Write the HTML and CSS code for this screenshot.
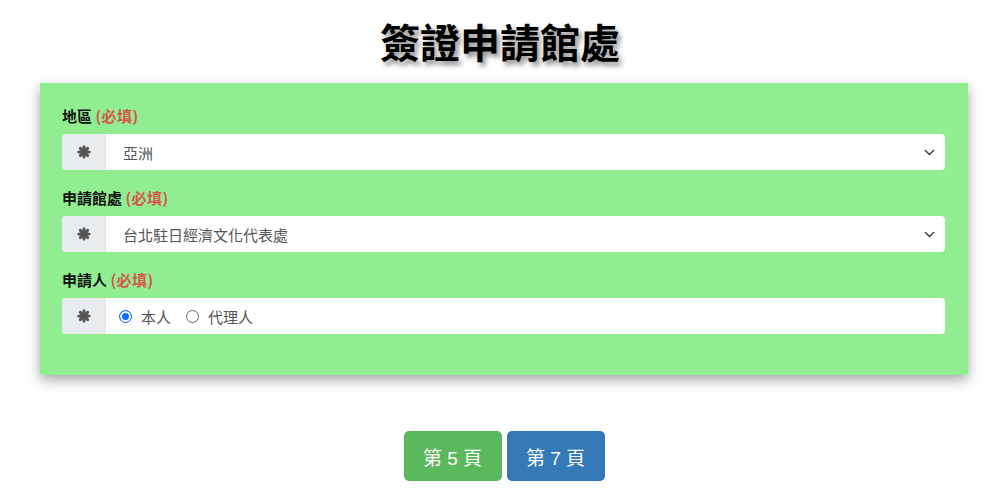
FILE: index.html
```html
<!DOCTYPE html>
<html lang="zh-Hant">
<head>
<meta charset="utf-8">
<link rel="stylesheet" href="styles.css">
</head>
<body>
<h1 class="title">簽證申請館處</h1>
<div class="panel">
  <div class="field">
    <label class="lbl">地區 <span class="req">(必填)</span></label>
    <div class="group">
      <span class="addon"><svg class="ast" width="14" height="14" viewBox="-10 -10 20 20"><g fill="#555"><ellipse cx="0" cy="-5.5" rx="2.3" ry="4.2"/><ellipse cx="0" cy="-5.5" rx="2.3" ry="4.2" transform="rotate(45)"/><ellipse cx="0" cy="-5.5" rx="2.3" ry="4.2" transform="rotate(90)"/><ellipse cx="0" cy="-5.5" rx="2.3" ry="4.2" transform="rotate(135)"/><ellipse cx="0" cy="-5.5" rx="2.3" ry="4.2" transform="rotate(180)"/><ellipse cx="0" cy="-5.5" rx="2.3" ry="4.2" transform="rotate(225)"/><ellipse cx="0" cy="-5.5" rx="2.3" ry="4.2" transform="rotate(270)"/><ellipse cx="0" cy="-5.5" rx="2.3" ry="4.2" transform="rotate(315)"/><circle r="3"/></g></svg></span>
      <div class="control select"><span>亞洲</span><svg class="chev" width="11" height="11" viewBox="0 0 16 16"><path d="M2 5l6 6 6-6" fill="none" stroke="#343a40" stroke-width="2" stroke-linecap="round" stroke-linejoin="round"/></svg></div>
    </div>
  </div>
  <div class="field">
    <label class="lbl">申請館處 <span class="req">(必填)</span></label>
    <div class="group">
      <span class="addon"><svg class="ast" width="14" height="14" viewBox="-10 -10 20 20"><g fill="#555"><ellipse cx="0" cy="-5.5" rx="2.3" ry="4.2"/><ellipse cx="0" cy="-5.5" rx="2.3" ry="4.2" transform="rotate(45)"/><ellipse cx="0" cy="-5.5" rx="2.3" ry="4.2" transform="rotate(90)"/><ellipse cx="0" cy="-5.5" rx="2.3" ry="4.2" transform="rotate(135)"/><ellipse cx="0" cy="-5.5" rx="2.3" ry="4.2" transform="rotate(180)"/><ellipse cx="0" cy="-5.5" rx="2.3" ry="4.2" transform="rotate(225)"/><ellipse cx="0" cy="-5.5" rx="2.3" ry="4.2" transform="rotate(270)"/><ellipse cx="0" cy="-5.5" rx="2.3" ry="4.2" transform="rotate(315)"/><circle r="3"/></g></svg></span>
      <div class="control select"><span>台北駐日經濟文化代表處</span><svg class="chev" width="11" height="11" viewBox="0 0 16 16"><path d="M2 5l6 6 6-6" fill="none" stroke="#343a40" stroke-width="2" stroke-linecap="round" stroke-linejoin="round"/></svg></div>
    </div>
  </div>
  <div class="field">
    <label class="lbl">申請人 <span class="req">(必填)</span></label>
    <div class="group">
      <span class="addon"><svg class="ast" width="14" height="14" viewBox="-10 -10 20 20"><g fill="#555"><ellipse cx="0" cy="-5.5" rx="2.3" ry="4.2"/><ellipse cx="0" cy="-5.5" rx="2.3" ry="4.2" transform="rotate(45)"/><ellipse cx="0" cy="-5.5" rx="2.3" ry="4.2" transform="rotate(90)"/><ellipse cx="0" cy="-5.5" rx="2.3" ry="4.2" transform="rotate(135)"/><ellipse cx="0" cy="-5.5" rx="2.3" ry="4.2" transform="rotate(180)"/><ellipse cx="0" cy="-5.5" rx="2.3" ry="4.2" transform="rotate(225)"/><ellipse cx="0" cy="-5.5" rx="2.3" ry="4.2" transform="rotate(270)"/><ellipse cx="0" cy="-5.5" rx="2.3" ry="4.2" transform="rotate(315)"/><circle r="3"/></g></svg></span>
      <div class="control radios">
        <label class="radio"><span class="dot on"></span>本人</label>
        <label class="radio"><span class="dot"></span>代理人</label>
      </div>
    </div>
  </div>
</div>
<div class="nav">
  <button class="btn green">第 5 頁</button>
  <button class="btn blue">第 7 頁</button>
</div>
</body>
</html>
```
FILE: styles.css
```css
* { box-sizing: border-box; }
body {
  margin: 0;
  background: #fff;
  font-family: "Liberation Sans", "Noto Sans CJK TC", sans-serif;
  color: #212529;
}
.title {
  margin: 16px 0 0;
  height: 50px;
  text-align: center;
  font-size: 40px;
  line-height: 50px;
  font-weight: 700;
  font-family: "Noto Sans CJK TC", sans-serif;
  color: #000;
  text-shadow: 3px 4px 5px rgba(0,0,0,0.45);
}
.panel {
  margin: 17px 32px 0 40px;
  background: #90ee90;
  padding: 23px 23px 41px 22px;
  box-shadow: 0 5px 12px rgba(0,0,0,0.35);
}
.field { margin-bottom: 18px; }
.field:last-child { margin-bottom: 0; }
.lbl {
  display: block;
  font-size: 15px;
  font-weight: 700;
  line-height: 20px;
  margin-bottom: 8px;
  font-family: "Noto Sans CJK TC", sans-serif;
  color: #111;
}
.req { color: #d9534f; letter-spacing: 0.5px; }
.group {
  display: flex;
  height: 36px;
  border-radius: 4px;
  overflow: hidden;
  background: #fff;
}
.addon {
  width: 44px;
  flex: none;
  background: #e9ecef;
  display: flex;
  align-items: center;
  justify-content: center;
  border-right: 1px solid #dee2e6;
}
.control {
  flex: 1;
  display: flex;
  align-items: center;
  padding: 0 10px 0 17px;
  font-size: 15px;
  color: #555;
  font-family: "Noto Sans CJK TC", sans-serif;
}
.select span { flex: 1; }
.chev { flex: none; }
.radios { padding-left: 13px; gap: 15px; }
.radio { display: flex; align-items: center; gap: 9px; }
.dot {
  width: 13px; height: 13px;
  border-radius: 50%;
  border: 1px solid #666;
  background: #fff;
}
.dot.on {
  border: 1px solid #0b6efd;
  background: #0b6efd;
  box-shadow: inset 0 0 0 2px #fff;
}
.nav {
  display: flex;
  justify-content: center;
  gap: 5px;
  margin-top: 56px;
  padding-left: 8px;
}
.btn {
  width: 98px;
  height: 50px;
  border: none;
  border-radius: 5px;
  color: #fff;
  font-size: 19px;
  font-family: "Liberation Sans", "Noto Sans CJK TC", sans-serif;
}
.green { background: #5cb85c; }
.blue { background: #337ab7; }
```
